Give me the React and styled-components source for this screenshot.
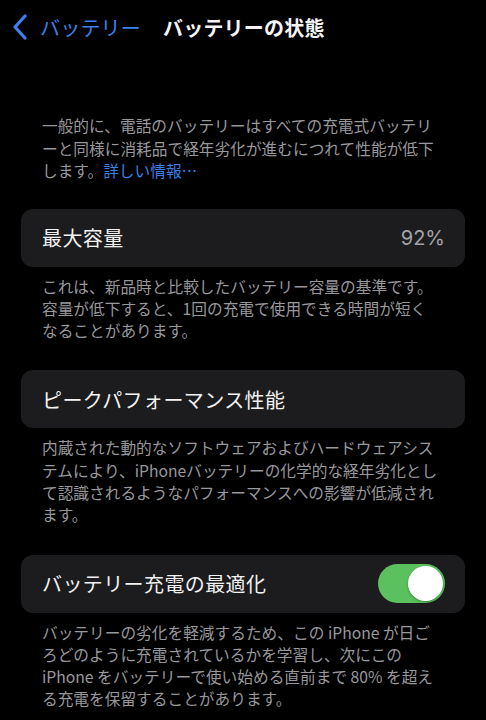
import React from 'react';
import styled, { createGlobalStyle } from 'styled-components';

const GlobalStyle = createGlobalStyle`
	body {
		margin: 0;
		background: #000;
		font-family: 'Noto Sans CJK JP', 'Noto Sans', sans-serif;
		-webkit-font-smoothing: antialiased;
	}
`;

const Page = styled.div`
	width: 486px;
	min-height: 720px;
	background: #000;
	overflow: hidden;
`;

const NavBar = styled.div`
	display: flex;
	align-items: center;
	height: 54px;
	padding: 0 12px;
`;

const BackButton = styled.div`
	display: flex;
	align-items: center;
	gap: 12px;
	color: #3b80ee;
	font-size: 20px;
	letter-spacing: 0.2px;
`;

const Title = styled.h1`
	margin: 0 0 0 22px;
	color: #f4f4f4;
	font-size: 20px;
	font-weight: 700;
	letter-spacing: 0.2px;
`;

const Content = styled.div`
	display: flex;
	flex-direction: column;
	padding: 0 21px;
`;

const Intro = styled.p`
	margin: 61px 0 26px;
	padding: 0 21px;
	color: #98989d;
	font-size: 15.7px;
	line-height: 22.5px;
	white-space: nowrap;
`;

const Link = styled.span`
	color: #3a7fe6;
`;

const Section = styled.div`
	display: flex;
	flex-direction: column;
	margin-bottom: 28px;
`;

const Card = styled.div`
	display: flex;
	align-items: center;
	justify-content: space-between;
	height: 58px;
	padding: 0 20px 0 21px;
	background: #1c1c1e;
	border-radius: 12px;
`;

const Label = styled.span`
	color: #f2f2f2;
	font-size: 20px;
	letter-spacing: 0.4px;
`;

const Value = styled.span`
	color: #a3a3a8;
	font-family: Inter, 'Noto Sans', sans-serif;
	font-size: 20px;
`;

const Note = styled.p`
	margin: 9px 0 0;
	padding: 0 21px;
	color: #98989d;
	font-size: 15.7px;
	line-height: 22.3px;
	white-space: nowrap;
`;

const Toggle = styled.div`
	display: flex;
	align-items: center;
	justify-content: ${props => (props.$on ? 'flex-end' : 'flex-start')};
	width: 67px;
	height: 39px;
	padding: 2px;
	box-sizing: border-box;
	border-radius: 20px;
	background: ${props => (props.$on ? '#5bc15e' : '#39393d')};
`;

const Knob = styled.div`
	width: 35px;
	height: 35px;
	border-radius: 50%;
	background: #fff;
	box-shadow: 0 1px 3px rgba(0, 0, 0, 0.3);
`;

const Chevron = () => (
	<svg width="16" height="26" viewBox="0 0 16 26">
		<polyline
			points="13,2 3,13 13,24"
			fill="none"
			stroke="#3b80ee"
			strokeWidth="3.2"
			strokeLinecap="round"
			strokeLinejoin="round"
		/>
	</svg>
);

const Lines = ({ lines }) =>
	lines.map((line, i) => (
		<React.Fragment key={i}>
			{line}
			{i < lines.length - 1 && <br />}
		</React.Fragment>
	));

const sections = [
	{
		label: '最大容量',
		value: '92%',
		note: [
			'これは、新品時と比較したバッテリー容量の基準です。',
			'容量が低下すると、1回の充電で使用できる時間が短く',
			'なることがあります。',
		],
	},
	{
		label: 'ピークパフォーマンス性能',
		note: [
			'内蔵された動的なソフトウェアおよびハードウェアシス',
			'テムにより、iPhoneバッテリーの化学的な経年劣化とし',
			'て認識されるようなパフォーマンスへの影響が低減され',
			'ます。',
		],
	},
	{
		label: 'バッテリー充電の最適化',
		toggle: true,
		note: [
			'バッテリーの劣化を軽減するため、この iPhone が日ご',
			'ろどのように充電されているかを学習し、次にこの',
			'iPhone をバッテリーで使い始める直前まで 80% を超え',
			'る充電を保留することがあります。',
		],
	},
];

export default function App() {
	return (
		<Page>
			<GlobalStyle />
			<NavBar>
				<BackButton>
					<Chevron />
					バッテリー
				</BackButton>
				<Title>バッテリーの状態</Title>
			</NavBar>
			<Content>
				<Intro>
					一般的に、電話のバッテリーはすべての充電式バッテリ
					<br />
					ーと同様に消耗品で経年劣化が進むにつれて性能が低下
					<br />
					します。<Link>詳しい情報…</Link>
				</Intro>
				{sections.map(s => (
					<Section key={s.label}>
						<Card>
							<Label>{s.label}</Label>
							{s.value && <Value>{s.value}</Value>}
							{s.toggle && (
								<Toggle $on>
									<Knob />
								</Toggle>
							)}
						</Card>
						<Note>
							<Lines lines={s.note} />
						</Note>
					</Section>
				))}
			</Content>
		</Page>
	);
}
